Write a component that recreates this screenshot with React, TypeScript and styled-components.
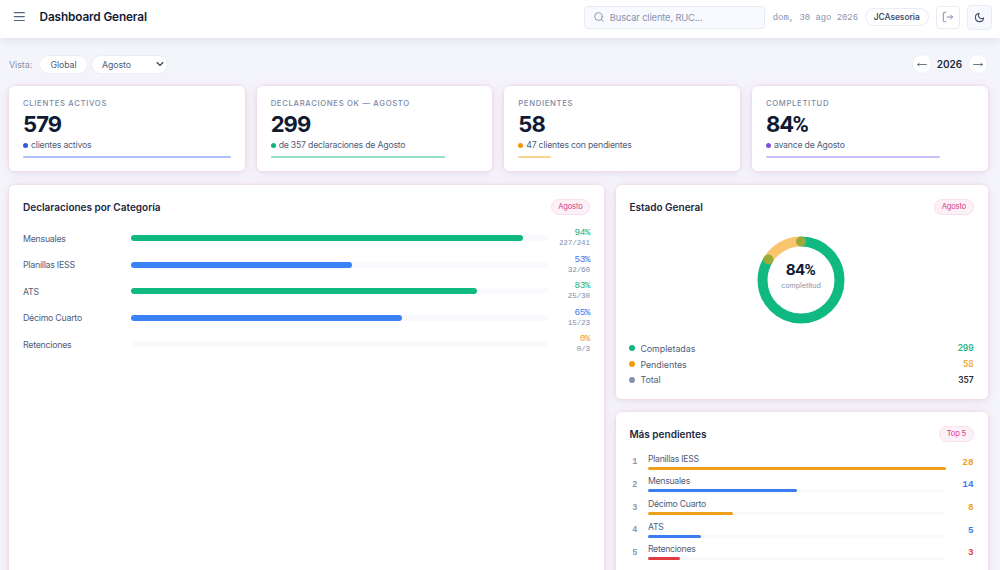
import React from "react";
import styled, { createGlobalStyle } from "styled-components";

const GlobalStyle = createGlobalStyle`
  * { box-sizing: border-box; }
  html, body { margin: 0; height: 570px; overflow: hidden; }
  body {
    font-family: Inter, "Liberation Sans", sans-serif;
    color: #1e293b;
    background: #f4f5fb;
  }
  button, select { font-family: inherit; }
`;

const mono = `"Liberation Mono", monospace`;

const Page = styled.div`
  display: flex;
  flex-direction: column;
  height: 570px;
  overflow: hidden;
`;

const Header = styled.header`
  display: flex;
  align-items: center;
  flex: none;
  height: 38px;
  padding: 0 8.5px 4px 12px;
  background: #fff;
  box-shadow: 0 1px 10px rgba(30, 41, 90, 0.13);
`;

const MenuButton = styled.button`
  display: flex;
  padding: 0;
  border: 0;
  background: none;
  color: #56657f;
`;

const PageTitle = styled.h1`
  margin: 0 auto 0 13.5px;
  font-size: 11.8px;
  font-weight: 600;
  letter-spacing: -0.13px;
  color: #131c35;
`;

const SearchBox = styled.div`
  display: flex;
  align-items: center;
  gap: 6px;
  width: 181px;
  height: 23px;
  padding: 0 9px;
  border: 1px solid #e6eaf3;
  border-radius: 4px;
  background: #f8faff;
  color: #8792ab;
  font-size: 9.4px;
  letter-spacing: -0.16px;
`;

const DateText = styled.span`
  margin-left: 8px;
  padding-top: 2px;
  font-family: ${mono};
  font-size: 8.9px;
  color: #8894ae;
  white-space: pre;
`;

const UserPill = styled.div`
  display: flex;
  align-items: center;
  justify-content: center;
  width: 63.5px;
  height: 18px;
  margin: 0 7px;
  border: 1px solid #e9ecf5;
  border-radius: 9px;
  font-size: 8.3px;
  font-weight: 600;
  color: #41506f;
`;

const IconButton = styled.button<{ $tinted?: boolean }>`
  display: flex;
  align-items: center;
  justify-content: center;
  width: ${(p) => (p.$tinted ? 25 : 24)}px;
  height: ${(p) => (p.$tinted ? 25 : 23)}px;
  padding: 0;
  margin-left: ${(p) => (p.$tinted ? 7 : 0)}px;
  border: 1px solid #e8ebf4;
  border-radius: 4px;
  background: ${(p) => (p.$tinted ? "#f8f9fe" : "#fff")};
  color: ${(p) => (p.$tinted ? "#475569" : "#8490a9")};
`;

const Main = styled.main`
  flex: 1;
  display: flex;
  flex-direction: column;
  padding: 16px 12.5px 0 9px;
  min-height: 0;
`;

const Toolbar = styled.div`
  display: flex;
  align-items: center;
  flex: none;
  height: 20px;
  margin-bottom: 12px;
`;

const ToolbarLabel = styled.span`
  width: 30px;
  font-size: 9px;
  letter-spacing: -0.1px;
  color: #8492ab;
`;

const Pill = styled.button<{ $w: number }>`
  display: flex;
  align-items: center;
  justify-content: space-between;
  width: ${(p) => p.$w}px;
  height: 19px;
  margin-right: 3px;
  padding: 0 2.5px 0 10.5px;
  border: 1px solid #ebeef6;
  border-radius: 10px;
  background: #fff;
  color: #4d5b78;
  font-size: 8.8px;
  letter-spacing: -0.08px;
`;

const YearNav = styled.div`
  display: flex;
  align-items: center;
  gap: 5px;
  margin-left: auto;
`;

const RoundButton = styled.button`
  display: flex;
  align-items: center;
  justify-content: center;
  width: 20px;
  height: 20px;
  padding: 0;
  border: 1px solid #eceff7;
  border-radius: 50%;
  background: #fff;
  color: #475569;
`;

const Year = styled.span`
  width: 26px;
  text-align: center;
  font-size: 10px;
  font-weight: 600;
`;

const Card = styled.section`
  border-radius: 5.5px;
  background: #fff;
  box-shadow: 0 0 3px rgba(236, 72, 153, 0.17), 0 2px 6px rgba(60, 40, 110, 0.04),
    0 1px 14px rgba(225, 60, 150, 0.1);
`;

const StatGrid = styled.div`
  display: grid;
  grid-template-columns: repeat(4, 1fr);
  gap: 12px;
  flex: none;
  height: 85px;
  margin-bottom: 14px;
`;

const StatCard = styled(Card)`
  display: flex;
  flex-direction: column;
  padding: 12px 14px 0;
`;

const StatLabel = styled.div`
  height: 11px;
  font-size: 7.7px;
  line-height: 11px;
  font-weight: 500;
  letter-spacing: 0.68px;
  white-space: nowrap;
  color: #7c8aa5;
`;

const StatValue = styled.div`
  height: 30px;
  font-size: 22px;
  line-height: 30px;
  font-weight: 700;
  letter-spacing: -0.9px;
  color: #111a33;
`;

const PercentSign = styled.span`
  margin-left: -0.8px;
  font-family: Roboto, sans-serif;
  letter-spacing: -4px;
`;

const StatNote = styled.div`
  display: flex;
  align-items: center;
  gap: 3px;
  height: 12px;
  font-size: 8.7px;
  letter-spacing: -0.2px;
  color: #4f5d7a;
`;

const Dot = styled.span<{ $color: string; $size?: number }>`
  flex: none;
  width: ${(p) => p.$size ?? 5}px;
  height: ${(p) => p.$size ?? 5}px;
  border-radius: 50%;
  background: ${(p) => p.$color};
`;

const StatBar = styled.div<{ $color: string }>`
  height: 2px;
  margin-top: 5px;
  border-radius: 1px;
  background: ${(p) => p.$color};
`;

const Columns = styled.div`
  display: grid;
  grid-template-columns: 595px 1fr;
  gap: 12px;
  flex: 1;
  min-height: 0;
`;

const SideColumn = styled.div`
  display: flex;
  flex-direction: column;
  gap: 12.5px;
`;

const Panel = styled(Card)<{ $h: number; $inset?: number }>`
  flex: none;
  height: ${(p) => p.$h}px;
  padding: 13.5px 14px 0 ${(p) => p.$inset ?? 14}px;
`;

const PanelHead = styled.div`
  display: flex;
  align-items: center;
  justify-content: space-between;
  height: 17px;
`;

const PanelTitle = styled.h2`
  margin: 0;
  font-size: 10px;
  font-weight: 600;
  color: #1d2842;
`;

const Tag = styled.span`
  padding: 0 6.5px;
  border: 1px solid #fbdfed;
  border-radius: 8px;
  background: #fdf1f8;
  font-size: 7.6px;
  line-height: 14px;
  letter-spacing: -0.2px;
  color: #d43a86;
`;

const CategoryList = styled.div`
  display: flex;
  flex-direction: column;
  padding-top: 9.6px;
`;

const CategoryRow = styled.div`
  display: grid;
  grid-template-columns: 98px 1fr 32px;
  column-gap: 10px;
  align-items: center;
  height: 26.45px;
  font-size: 8.8px;
  letter-spacing: -0.25px;
  color: #4f5d7a;
`;

const Track = styled.div<{ $h: number }>`
  height: ${(p) => p.$h}px;
  border-radius: 3px;
  background: #f8fafe;
`;

const Fill = styled.div<{ $color: string }>`
  height: 100%;
  border-radius: 3px;
  background: ${(p) => p.$color};
`;

const Figures = styled.div`
  display: flex;
  flex-direction: column;
  align-items: flex-end;
  font-family: ${mono};
`;

const Percent = styled.span<{ $color: string }>`
  font-size: 9.4px;
  line-height: 11px;
  letter-spacing: -0.5px;
  color: ${(p) => p.$color};
`;

const Ratio = styled.span`
  font-size: 7.6px;
  line-height: 11px;
  letter-spacing: -0.12px;
  color: #7f8ca6;
`;

const DonutBox = styled.div`
  display: flex;
  justify-content: center;
  height: 125px;
  padding-top: 20.5px;
`;

const LegendRow = styled.div`
  display: flex;
  align-items: center;
  gap: 5px;
  height: 15.8px;
  font-size: 8.9px;
  letter-spacing: -0.04px;
  color: #4f5d7a;
`;

const LegendValue = styled.span<{ $color: string }>`
  margin-left: auto;
  font-weight: 600;
  font-size: 8.4px;
  color: ${(p) => p.$color};
`;

const RankList = styled.div`
  display: flex;
  flex-direction: column;
  padding-top: 8px;
`;

const RankRow = styled.div`
  display: grid;
  grid-template-columns: 11px 298px 1fr;
  column-gap: 7.5px;
  align-items: center;
  height: 22.65px;
`;

const RankIndex = styled.span`
  padding-top: 2px;
  text-align: center;
  font-family: ${mono};
  font-size: 8.5px;
  font-weight: 700;
  color: #8a9ab0;
`;

const RankName = styled.div`
  height: 14px;
  font-size: 8.7px;
  line-height: 12px;
  letter-spacing: -0.26px;
  color: #4f5d7a;
`;

const RankValue = styled.span<{ $color: string }>`
  padding-top: 2px;
  text-align: right;
  font-family: ${mono};
  font-size: 9.3px;
  font-weight: 700;
  color: ${(p) => p.$color};
`;

const GREEN = "#10b981";
const BLUE = "#3b82f6";
const AMBER = "#f59e0b";

const stats = [
  { label: "CLIENTES ACTIVOS", value: "579", note: "clientes activos", dot: "#2f5be0", bar: "#aebffa", pct: 100 },
  { label: "DECLARACIONES OK — AGOSTO", value: "299", note: "de 357 declaraciones de Agosto", dot: "#10b27c", bar: "#93e0c4", pct: 84 },
  { label: "PENDIENTES", value: "58", note: "47 clientes con pendientes", dot: "#f0980c", bar: "#fbd590", pct: 16 },
  { label: "COMPLETITUD", value: "84", percent: true, note: "avance de Agosto", dot: "#8352dc", bar: "#cdbdfb", pct: 84 },
];

const categories = [
  { name: "Mensuales", pct: 94, ratio: "227/241", color: GREEN, text: "#22b382" },
  { name: "Planillas IESS", pct: 53, ratio: "32/60", color: BLUE, text: "#4273ee" },
  { name: "ATS", pct: 83, ratio: "25/30", color: GREEN, text: "#22b382" },
  { name: "Décimo Cuarto", pct: 65, ratio: "15/23", color: BLUE, text: "#4273ee" },
  { name: "Retenciones", pct: 0, ratio: "0/3", color: AMBER, text: "#f09c1c" },
];

const ranking = [
  { name: "Planillas IESS", value: 28, pct: 100, color: "#efa01b" },
  { name: "Mensuales", value: 14, pct: 50, color: "#3b7df0" },
  { name: "Décimo Cuarto", value: 8, pct: 28.6, color: "#efa01b" },
  { name: "ATS", value: 5, pct: 17.9, color: "#3b7df0" },
  { name: "Retenciones", value: 3, pct: 10.7, color: "#e23c42" },
];

const Donut = () => {
  const r = 38.5;
  const c = 2 * Math.PI * r;
  const done = 0.8375;
  return (
    <svg width="88" height="88" viewBox="0 0 88 88" fill="none">
      <g transform="rotate(-90 44 44)" strokeWidth="10" strokeLinecap="round">
        <circle cx="44" cy="44" r={r} stroke={GREEN} strokeDasharray={`${c * done} ${c}`} />
        <circle
          cx="44" cy="44" r={r} stroke={AMBER} opacity="0.6"
          strokeDasharray={`${c * (1 - done)} ${c}`} strokeDashoffset={-c * done}
        />
      </g>
      <text x="43.5" y="39" textAnchor="middle" fontSize="15.2" fontWeight="700" letterSpacing="-0.7" fill="#111a33">
        84<tspan fontFamily="Roboto">%</tspan>
      </text>
      <text x="44" y="52.3" textAnchor="middle" fontSize="7.1" fill="#8592ab">completitud</text>
    </svg>
  );
};

const Arrow = ({ flip }: { flip?: boolean }) => (
  <svg width="10" height="8" viewBox="0 0 10 8" fill="none" stroke="currentColor" strokeWidth="0.8" transform={flip ? "scale(-1 1)" : undefined}>
    <path d="M0.2 4.5h9.2M7.6 3l1.9 1.5-1.9 1.5" />
  </svg>
);

export default function App() {
  return (
    <>
      <GlobalStyle />
      <Page>
        <Header>
          <MenuButton aria-label="Menú">
            <svg width="14" height="12" viewBox="0 0 14 12" stroke="currentColor" strokeWidth="1.2" strokeLinecap="round">
              <path d="M2.3 1.7h10M2.3 5.6h10M2.3 9.5h10" />
            </svg>
          </MenuButton>
          <PageTitle>Dashboard General</PageTitle>
          <SearchBox>
            <svg width="10" height="10" viewBox="0 0 10 10" fill="none" stroke="currentColor" strokeWidth="0.95" strokeLinecap="round">
              <circle cx="4.5" cy="4.5" r="3.8" />
              <path d="M7.3 7.3l2 2" />
            </svg>
            Buscar cliente, RUC...
          </SearchBox>
          <DateText>dom, 30 ago 2026</DateText>
          <UserPill>JCAsesoria</UserPill>
          <IconButton aria-label="Salir">
            <svg width="12" height="12" viewBox="0 0 12 12" fill="none" stroke="currentColor" strokeLinecap="round" strokeLinejoin="round">
              <path d="M3.8 1.3H2.2a.9.9 0 0 0-.9.9v7.6a.9.9 0 0 0 .9.9h1.6M5 6h5.6M8.6 4L10.6 6 8.6 8" />
            </svg>
          </IconButton>
          <IconButton $tinted aria-label="Tema">
            <svg width="11" height="11" viewBox="0 0 24 24" fill="none" stroke="currentColor" strokeWidth="2.3" strokeLinejoin="round">
              <path d="M21 12.8A9 9 0 1 1 11.2 3 7 7 0 0 0 21 12.8z" />
            </svg>
          </IconButton>
        </Header>
        <Main>
          <Toolbar>
            <ToolbarLabel>Vista:</ToolbarLabel>
            <Pill $w={48.5}>Global</Pill>
            <Pill $w={77}>
              Agosto
              <svg width="8" height="6" viewBox="0 0 8 6" fill="none" stroke="#334155" strokeWidth="1.3">
                <path d="M0.8 1.2L4 4.4l3.2-3.2" />
              </svg>
            </Pill>
            <YearNav>
              <RoundButton aria-label="Año anterior"><Arrow flip /></RoundButton>
              <Year>2026</Year>
              <RoundButton aria-label="Año siguiente"><Arrow /></RoundButton>
            </YearNav>
          </Toolbar>
          <StatGrid>
            {stats.map((s) => (
              <StatCard key={s.label}>
                <StatLabel>{s.label}</StatLabel>
                <StatValue>{s.value}{s.percent && <PercentSign>%</PercentSign>}</StatValue>
                <StatNote><Dot $color={s.dot} />{s.note}</StatNote>
                <StatBar $color={s.bar} style={{ width: `${s.pct}%` }} />
              </StatCard>
            ))}
          </StatGrid>
          <Columns>
            <Panel $h={440}>
              <PanelHead>
                <PanelTitle>Declaraciones por Categoría</PanelTitle>
                <Tag>Agosto</Tag>
              </PanelHead>
              <CategoryList>
                {categories.map((c) => (
                  <CategoryRow key={c.name}>
                    <span>{c.name}</span>
                    <Track $h={6}><Fill $color={c.color} style={{ width: `${c.pct}%` }} /></Track>
                    <Figures>
                      <Percent $color={c.text}>{c.pct}%</Percent>
                      <Ratio>{c.ratio}</Ratio>
                    </Figures>
                  </CategoryRow>
                ))}
              </CategoryList>
            </Panel>
            <SideColumn>
              <Panel $h={214} $inset={13.4}>
                <PanelHead>
                  <PanelTitle>Estado General</PanelTitle>
                  <Tag>Agosto</Tag>
                </PanelHead>
                <DonutBox><Donut /></DonutBox>
                <LegendRow><Dot $size={6} $color={GREEN} />Completadas<LegendValue $color="#25b585">299</LegendValue></LegendRow>
                <LegendRow><Dot $size={6} $color={AMBER} />Pendientes<LegendValue $color="#f2a531">58</LegendValue></LegendRow>
                <LegendRow><Dot $size={6} $color="#8391ad" />Total<LegendValue $color="#1e293b">357</LegendValue></LegendRow>
              </Panel>
              <Panel $h={220} $inset={13.4}>
                <PanelHead>
                  <PanelTitle>Más pendientes</PanelTitle>
                  <Tag>Top 5</Tag>
                </PanelHead>
                <RankList>
                  {ranking.map((r, i) => (
                    <RankRow key={r.name}>
                      <RankIndex>{i + 1}</RankIndex>
                      <div>
                        <RankName>{r.name}</RankName>
                        <Track $h={3}><Fill $color={r.color} style={{ width: `${r.pct}%` }} /></Track>
                      </div>
                      <RankValue $color={r.color}>{r.value}</RankValue>
                    </RankRow>
                  ))}
                </RankList>
              </Panel>
            </SideColumn>
          </Columns>
        </Main>
      </Page>
    </>
  );
}
